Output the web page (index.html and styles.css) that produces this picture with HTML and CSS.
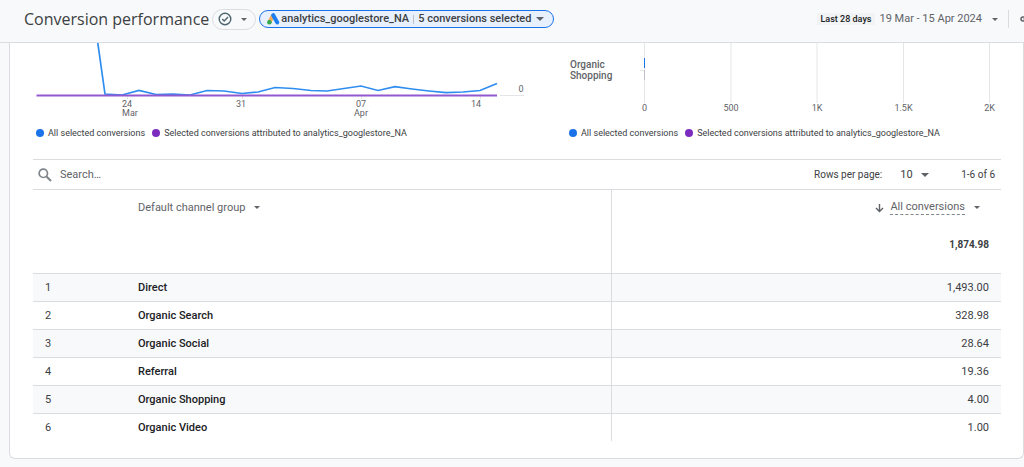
FILE: index.html
```html
<!DOCTYPE html>
<html lang="en">
<head>
<meta charset="utf-8">
<meta name="viewport" content="width=device-width, initial-scale=1">
<title>Conversion performance</title>
<link rel="stylesheet" href="styles.css">
</head>
<body>
<header class="topbar">
  <h1 class="title">Conversion performance</h1>
  <button class="pill status" type="button" aria-label="Report status">
    <svg width="14" height="14" viewBox="0 0 14 14" fill="none" stroke="#4c6570" stroke-width="1.4"><circle cx="7" cy="7" r="5.8"/><path d="M4.2 7.1l2 2 3.8-4"/></svg>
    <span class="caret"></span>
  </button>
  <button class="pill account" type="button">
    <svg width="13" height="12" viewBox="0 0 13 12"><path d="M6 2.5L2.6 8.8" stroke="#f5ad55" stroke-width="4" stroke-linecap="butt"/><path d="M6.200 2.200l4 7.2" stroke="#1a7df0" stroke-width="4" stroke-linecap="round"/><circle cx="2.4" cy="9.3" r="2.3" fill="#34a853"/></svg>
    <span class="account-name">analytics_googlestore_NA</span>
    <span class="bar"></span>
    <span>5 conversions selected</span>
    <span class="caret wide"></span>
  </button>
  <div class="dates">
    <span class="chip">Last 28 days</span>
    <button class="range" type="button">19 Mar - 15 Apr 2024 <span class="caret"></span></button>
    <span class="divider"></span>
    <button class="more" type="button" aria-label="Share"><svg width="12" height="8" viewBox="0 0 12 8" fill="none" stroke="#5f6368" stroke-width="1.5"><rect x="1" y="2" width="6" height="4" rx="2"/><path d="M3.500 4h5"/></svg></button>
  </div>
</header>

<main class="card">
  <div class="charts">
    <section>
      <svg class="plot" viewBox="0 0 533 79" role="img" aria-label="Conversions over time">
        <path class="grid" d="M467 52.500h24M94.500 53v3M209.500 53v3M328.500 53v3M447.500 53v3"/>
        <polyline class="line-all" points="64.500,-2 72,51 89,52 106,47.500 123,51.500 140,51 157,52 174,47.500 191,48 209,50.500 225,49 242,44.500 260,45.500 278,47.500 294,48 311,45.500 328,43 345,47.500 362,43.700 379,46 396,48 413,49.700 430,49 447,47.500 464,40.500"/>
        <path class="line-attr" d="M3.500 52.500H464"/>
        <g class="axis"><text x="94" y="64" text-anchor="middle">24</text><text x="97" y="73" text-anchor="middle">Mar</text><text x="208" y="64" text-anchor="middle">31</text><text x="328" y="64" text-anchor="middle">07</text><text x="328" y="73" text-anchor="middle">Apr</text><text x="443" y="64" text-anchor="middle">14</text><text x="488" y="49" text-anchor="middle">0</text></g>
      </svg>
      <ul class="legend"><li class="all">All selected conversions</li><li class="attr">Selected conversions attributed to analytics_googlestore_NA</li></ul>
    </section>
    <section>
      <svg class="plot" viewBox="0 0 435 79" role="img" aria-label="Conversions by channel">
        <path class="grid" d="M78.500 0v60M165 0v60M251 0v60M337.500 0v60M423.500 0v60M74 27.500h4"/>
        <path class="bar-all" d="M78.500 15v10"/>
        <path class="bar-attr" d="M78.500 27v10"/>
        <g class="channel"><text x="4" y="25">Organic</text><text x="4" y="36">Shopping</text></g>
        <g class="axis" text-anchor="middle"><text x="78.500" y="68">0</text><text x="165" y="68">500</text><text x="251" y="68">1K</text><text x="337.500" y="68">1.5K</text><text x="423.500" y="68">2K</text></g>
      </svg>
      <ul class="legend"><li class="all">All selected conversions</li><li class="attr">Selected conversions attributed to analytics_googlestore_NA</li></ul>
    </section>
  </div>

  <div class="toolbar">
    <label class="search-icon" for="search" aria-label="Search"><svg width="14" height="14" viewBox="0 0 14 14" fill="none" stroke="#80868b"><circle cx="5.300" cy="5.300" r="4.200" stroke-width="1.700"/><path d="M8.500 8.500l4.500 4.500" stroke-width="2.100"/></svg></label>
    <input class="search" id="search" type="text" placeholder="Search…">
    <label class="rows-label" for="rows">Rows per page:</label>
    <span class="rows"><select id="rows"><option>10</option><option>25</option></select><span class="caret wide"></span></span>
    <span class="count">1-6 of 6</span>
  </div>

  <table class="data">
    <colgroup><col class="c-num"><col><col class="c-val"></colgroup>
    <thead>
      <tr class="heads"><th></th><th><button type="button" class="head">Default channel group <span class="caret"></span></button></th>
      <th class="val"><button type="button" class="head"><svg width="9" height="10" viewBox="0 0 9 10" fill="none" stroke="#5f6368" stroke-width="1.400"><path d="M4.500 1v7.500M1 5l3.500 3.500L8 5"/></svg><span class="metric">All conversions</span><span class="caret"></span></button></th></tr>
      <tr class="totals"><td></td><td></td><td class="val">1,874.98</td></tr>
    </thead>
    <tbody>
      <tr><td>1</td><th scope="row">Direct</th><td class="val">1,493.00</td></tr>
      <tr><td>2</td><th scope="row">Organic Search</th><td class="val">328.98</td></tr>
      <tr><td>3</td><th scope="row">Organic Social</th><td class="val">28.64</td></tr>
      <tr><td>4</td><th scope="row">Referral</th><td class="val">19.36</td></tr>
      <tr><td>5</td><th scope="row">Organic Shopping</th><td class="val">4.00</td></tr>
      <tr><td>6</td><th scope="row">Organic Video</th><td class="val">1.00</td></tr>
    </tbody>
  </table>
</main>
</body>
</html>
```
FILE: styles.css
```css
* { box-sizing: border-box; }
body {
  margin: 0;
  background: #f8f9fa;
  color: #3c4043;
  font: 11px/14px Roboto, "Liberation Sans", sans-serif;
  overflow-x: hidden;
}
button, input, select { font: inherit; color: inherit; border: 0; background: none; padding: 0; margin: 0; }
button { display: flex; align-items: center; white-space: nowrap; cursor: pointer; }

.caret { flex: none; border: 3px solid transparent; border-top-color: #5f6368; border-bottom: 0; }
.caret.wide { border-width: 4px 4px 0; }

.topbar {
  display: flex;
  align-items: center;
  height: 43px;
  padding: 0 0 4px 24px;
  border-bottom: 1px solid #dadce0;
  overflow: hidden;
}
.title { margin: 0 3px 0 0; font: 400 16px/24px "Open Sans", sans-serif; color: #3c4043; white-space: nowrap; }
.pill { flex: none; border-radius: 11px; }
.status { height: 21px; width: 44px; padding: 0 8px 0 5px; justify-content: space-between; border: 1px solid #dadce0; }
.account {
  height: 18px;
  margin-left: 3px;
  padding: 0 9px 0 7px;
  border: 1px solid #1a73e8;
  background: #e8f0fe;
  font-weight: 500;
}
.account .bar { width: 1px; height: 9px; margin: 0 4px; background: #bdc1c6; }
.account-name { margin-left: 1px; }
.account .caret { margin-left: 5px; }
.dates { display: flex; align-items: center; margin-left: auto; margin-right: -8px; }
.chip { padding: 0 4px; background: #f1f3f4; font-size: 9px; line-height: 12px; font-weight: 500; color: #202124; white-space: nowrap; }
.range { margin-left: 4px; color: #5f6368; }
.range .caret { margin-left: 10px; }
.divider { width: 1px; height: 18px; margin: 0 11px 0 10px; background: #dadce0; }

.card {
  margin-left: 9px;
  padding: 0 22px 17px 23px;
  background: #fff;
  border: 1px solid #dadce0;
  border-top: 0;
  border-radius: 0 0 6px 6px;
}
.charts { display: grid; grid-template-columns: 533fr 435fr; }
.charts section { min-width: 0; }
.plot { display: block; width: 100%; overflow: hidden; }
.grid { stroke: #e3e5e8; fill: none; }
.plot .grid { display: inline; }
.line-all { stroke: #2f8df0; stroke-width: 1.700; fill: none; }
.line-attr { stroke: #9158d0; stroke-width: 2; }
.bar-all { stroke: #1a73e8; }
.bar-attr { stroke: #bdc1c6; }
.axis { font-size: 9px; fill: #5f6368; }
.channel { font-size: 10px; font-weight: 500; fill: #5f6368; }
.legend { display: flex; gap: 7px; margin: 0; padding: 4px 0 19px 3px; list-style: none; font-size: 9px; white-space: nowrap; }
.legend li { display: flex; align-items: center; gap: 4px; }
.legend li::before { content: ""; width: 8px; height: 8px; border-radius: 50%; background: #1a73e8; }
.legend .attr::before { background: #7b2cbf; }

.toolbar {
  display: flex;
  align-items: center;
  height: 31px;
  padding: 0 6px 0 5px;
  border: solid #dadce0;
  border-width: 1px 0;
}
.search-icon { display: flex; }
.search { flex: 1; min-width: 0; margin-left: 8px; outline: 0; }
.search::placeholder { color: #5f6368; opacity: 1; }
.rows-label, .count { font-size: 10px; }
.rows { display: flex; align-items: center; gap: 8px; margin: 0 32px 0 18px; }
.rows select { appearance: none; }

.data { width: 100%; table-layout: fixed; border-collapse: separate; border-spacing: 0; }
.c-num { width: 105px; }
.c-val { width: 390px; }
.data th, .data td { padding: 0; text-align: left; font-weight: 400; }
.data .val { padding-right: 12px; text-align: right; border-left: 1px solid #dadce0; }
.heads th { height: 35px; }
.head { color: #5f6368; }
.head .caret { margin-left: 9px; }
.val .head { margin-left: auto; padding-right: 9px; }
.metric { margin-left: 6px; border-bottom: 1px dashed #80868b; }
.data .totals td { height: 48px; padding-bottom: 8px; font-size: 10px; font-weight: 700; }
.data tbody th, .data tbody td { height: 28px; border-top: 1px solid #dadce0; }
.data tbody td:first-child { padding-left: 12px; }
.data tbody th { font-weight: 500; color: #202124; }
.data tbody tr:nth-child(odd) { background: #f8f9fa; }
```
